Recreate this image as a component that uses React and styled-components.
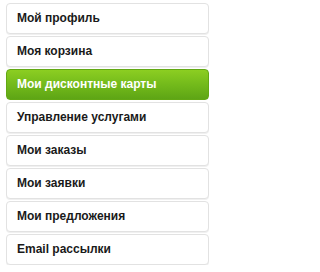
// # IMPORTS
import React from 'react';
import styled, { createGlobalStyle } from 'styled-components';

// # GLOBAL
const GlobalStyle = createGlobalStyle`
    html, body {
        margin: 0;
        padding: 0;
        background: #ffffff;
    }
`;

// # STYLED
const Menu = styled.ul`
    list-style: none;
    margin: 0;
    padding: 3px 7px 0 6px;
    display: flex;
    flex-direction: column;
    gap: 2px;
    width: 203px;
    font-family: "Liberation Sans", Arial, sans-serif;
`;
const Item = styled.li`
    box-sizing: border-box;
    height: 31px;
    display: flex;
    align-items: center;
    padding: 0 0 1px 10px;
    font-size: 12px;
    font-weight: bold;
    border-radius: 4px;
    border: 1px solid ${props => props.active ? '#62a814' : '#e2e2e2'};
    color: ${props => props.active ? '#ffffff' : '#1a1a1a'};
    background: ${props => props.active
        ? 'linear-gradient(to bottom, #8cce22 0%, #73ba1b 50%, #5ea515 100%)'
        : '#ffffff'};
    box-shadow: ${props => props.active ? 'none' : '0 1px 0 #f0f0f0'};
    cursor: pointer;
`;

const items = [
    'Мой профиль',
    'Моя корзина',
    'Мои дисконтные карты',
    'Управление услугами',
    'Мои заказы',
    'Мои заявки',
    'Мои предложения',
    'Email рассылки'
];

// # COMPONENT
export default function App(){
    return(
        <>
            <GlobalStyle/>
            <Menu>
                {items.map((label, i) => (
                    <Item key={label} active={i === 2}>{label}</Item>
                ))}
            </Menu>
        </>
    );
}
